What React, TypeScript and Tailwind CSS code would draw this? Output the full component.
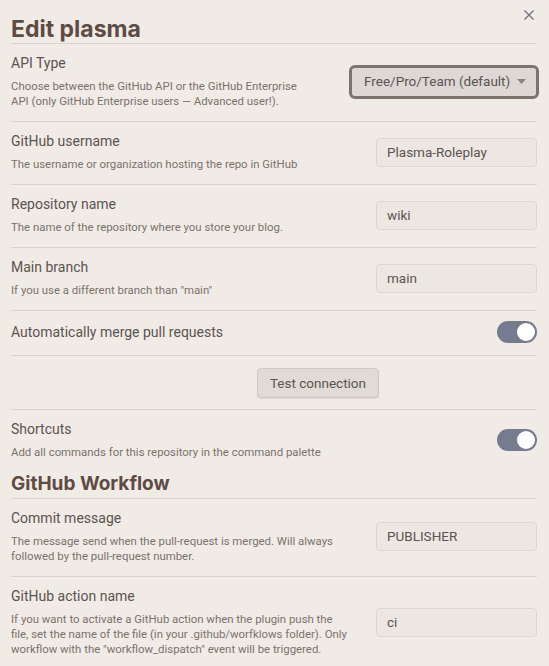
import React from "react";

const font = { fontFamily: "Roboto, 'Liberation Sans', sans-serif" };
const headFont = { fontFamily: "Inter, Roboto, sans-serif" };

function Row({
  label,
  desc,
  control,
  first,
}: {
  label: string;
  desc?: React.ReactNode;
  control: React.ReactNode;
  first?: boolean;
}) {
  return (
    <div
      className={
        "flex items-center pt-[10px] " +
        (desc ? "pb-3 " : "pb-[12px] ") +
        (first ? "" : "border-t border-[#d9d3cc]")
      }
    >
      <div className="flex-1 min-w-0 mr-4">
        <div className="text-[14px] leading-[19px] text-[#5b5450]">{label}</div>
        {desc && (
          <div className="pt-[6px] text-[11.4px] leading-[15px] text-[#7b726c] whitespace-nowrap">
            {desc}
          </div>
        )}
      </div>
      <div className="shrink-0 flex items-center">{control}</div>
    </div>
  );
}

function Input({ value }: { value: string }) {
  return (
    <div className="w-[161px] h-[29px] rounded-[4px] border border-[#dcd6cf] bg-[#ede7e1] px-[10px] flex items-center text-[13.5px] text-[#5b5450]">
      {value}
    </div>
  );
}

function Toggle() {
  return (
    <div className="w-[40px] h-[22px] rounded-full bg-[#767c90] relative">
      <div className="absolute right-[2px] top-[2px] w-[18px] h-[18px] rounded-full bg-white"></div>
    </div>
  );
}

export default function App() {
  return (
    <div className="w-[549px] h-[666px] bg-[#f0ebe5] overflow-hidden relative" style={font}>
      <div className="absolute right-[15px] top-[10px] text-[#6c7080]">
        <svg width="10" height="10" viewBox="0 0 10 10" fill="none" stroke="currentColor" strokeWidth="1.3">
          <path d="M0.5 0.5 L9.5 9.5 M9.5 0.5 L0.5 9.5" />
        </svg>
      </div>
      <div className="px-[11px] pr-[12px]">
        <div
          className="pt-[16px] border-b border-[#d9d3cc] text-[23px] leading-[27px] font-bold text-[#5e4b43]"
          style={headFont}
        >
          Edit plasma
        </div>
        <Row
          first
          label="API Type"
          desc={
            <>
              Choose between the GitHub API or the GitHub Enterprise
              <br />
              API (only GitHub Enterprise users — Advanced user!).
            </>
          }
          control={
            <div className="w-[190px] h-[34px] -mr-[2px] rounded-[6px] border-[3px] border-[#7f736e] bg-[#ddd8d3] flex items-center pl-[12px] pr-[10px] text-[13.5px] text-[#5b5450]">
              <span className="flex-1 whitespace-nowrap">Free/Pro/Team (default)</span>
              <svg width="9" height="5" viewBox="0 0 9 5">
                <path d="M0 0 L9 0 L4.5 5 Z" fill="#8a8580" />
              </svg>
            </div>
          }
        />
        <Row
          label="GitHub username"
          desc="The username or organization hosting the repo in GitHub"
          control={<Input value="Plasma-Roleplay" />}
        />
        <Row
          label="Repository name"
          desc="The name of the repository where you store your blog."
          control={<Input value="wiki" />}
        />
        <Row
          label="Main branch"
          desc={'If you use a different branch than "main"'}
          control={<Input value="main" />}
        />
        <Row label="Automatically merge pull requests" control={<Toggle />} />
        <div className="border-t border-[#d9d3cc] pt-3 pb-[11px] pl-[246px]">
          <button className="w-[122px] h-[30px] rounded-[4px] border border-[#cfc9c3] bg-[#e0dbd5] text-[13.5px] text-[#5b5450] shadow-[0_1px_1px_rgba(0,0,0,0.08)]">
            Test connection
          </button>
        </div>
        <Row
          label="Shortcuts"
          desc="Add all commands for this repository in the command palette"
          control={<Toggle />}
        />
        <div
          className="pb-[3px] border-b border-[#d9d3cc] text-[19px] leading-[23px] font-bold text-[#5e4b43]"
          style={headFont}
        >
          GitHub Workflow
        </div>
        <Row
          first
          label="Commit message"
          desc={
            <>
              The message send when the pull-request is merged. Will always
              <br />
              followed by the pull-request number.
            </>
          }
          control={<Input value="PUBLISHER" />}
        />
        <Row
          label="GitHub action name"
          desc={
            <>
              If you want to activate a GitHub action when the plugin push the
              <br />
              file, set the name of the file (in your .github/worfklows folder). Only
              <br />
              workflow with the "workflow_dispatch" event will be triggered.
            </>
          }
          control={<Input value="ci" />}
        />
      </div>
    </div>
  );
}
